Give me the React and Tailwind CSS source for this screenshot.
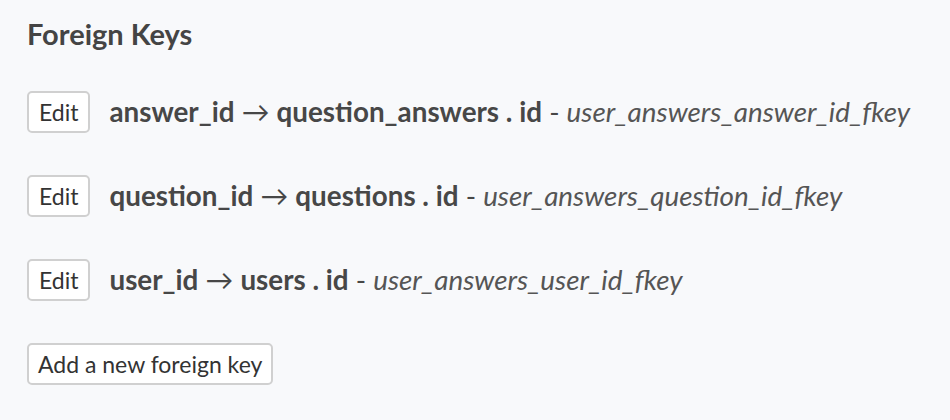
const keys = [
  { col: 'answer_id', table: 'question_answers', ref: 'id', name: 'user_answers_answer_id_fkey' },
  { col: 'question_id', table: 'questions', ref: 'id', name: 'user_answers_question_id_fkey' },
  { col: 'user_id', table: 'users', ref: 'id', name: 'user_answers_user_id_fkey' },
];

function KeyRow({ fk }) {
  return (
    <div className="flex items-center gap-[19px] h-[42px]">
      <button className="h-[42px] px-[10px] bg-white border-2 border-[#d0d0d0] rounded-[5px] text-[23px] text-[#333]">
        Edit
      </button>
      <div className="text-[27.8px] text-[#474747] whitespace-nowrap">
        <span className="font-bold">{fk.col}</span>
        <span className="font-normal"> → </span>
        <span className="font-bold">{fk.table} . {fk.ref}</span>
        <span> - </span>
        <span className="italic text-[#555]">{fk.name}</span>
      </div>
    </div>
  );
}

export default function App() {
  return (
    <div className="min-h-[420px] bg-[#f8f9fb] px-[27px] pt-[15px] font-['Lato',sans-serif]">
      <h2 className="text-[29px] font-bold text-[#444] leading-[38px]">Foreign Keys</h2>
      <div className="mt-[38px] flex flex-col gap-[42px]">
        {keys.map((fk) => (
          <KeyRow key={fk.name} fk={fk} />
        ))}
        <div>
          <button className="h-[42px] px-[9px] bg-white border-2 border-[#d0d0d0] rounded-[5px] text-[23px] text-[#333]">
            Add a new foreign key
          </button>
        </div>
      </div>
    </div>
  );
}
